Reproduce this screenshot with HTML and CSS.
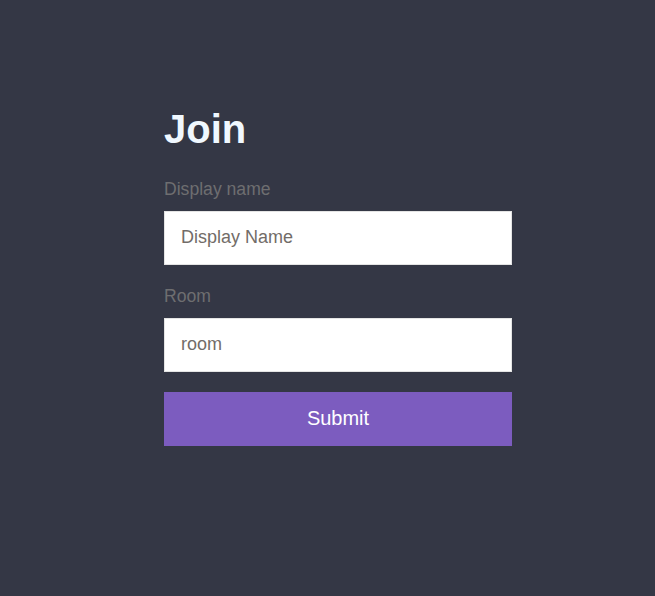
FILE: index.html
```html
<!DOCTYPE html>
<html lang="en">
<head>
<meta charset="utf-8">
<title>Join</title>
<link rel="stylesheet" href="styles.css">
</head>
<body>
<main class="page">
  <form class="join-form">
    <h1 class="title">Join</h1>
    <div class="field">
      <label class="label" for="name">Display name</label>
      <input class="input" id="name" type="text" placeholder="Display Name">
    </div>
    <div class="field">
      <label class="label" for="room">Room</label>
      <input class="input" id="room" type="text" placeholder="room">
    </div>
    <button class="submit" type="button">Submit</button>
  </form>
</main>
</body>
</html>
```

FILE: styles.css
```css
html, body {
  margin: 0;
  padding: 0;
  background: #343745;
  height: 100%;
}
body {
  font-family: "Liberation Sans", Arial, sans-serif;
}
.page {
  padding: 106px 0 0 164px;
}
.join-form {
  width: 348px;
  display: flex;
  flex-direction: column;
}
.title {
  margin: 0 0 26px;
  font-size: 40px;
  line-height: 46px;
  font-weight: bold;
  color: #f0f8ff;
}
.field {
  display: flex;
  flex-direction: column;
  margin-bottom: 20px;
}
.label {
  font-size: 17.6px;
  line-height: 21px;
  padding-top: 1px;
  color: #6e6e70;
  margin-bottom: 11px;
}
.input {
  box-sizing: border-box;
  height: 54px;
  width: 100%;
  margin: 0;
  padding: 0 16px 2px;
  border: 1px solid #e4e4e4;
  background: #ffffff;
  font-family: "Liberation Sans", Arial, sans-serif;
  font-size: 18px;
  color: #333;
  outline: none;
}
.input::placeholder {
  color: #726c68;
  opacity: 1;
}
.submit {
  box-sizing: border-box;
  height: 54px;
  width: 100%;
  margin: 0;
  padding: 0 0 2px;
  border: none;
  background: #7c5cbf;
  color: #ffffff;
  font-family: "Liberation Sans", Arial, sans-serif;
  font-size: 20px;
  cursor: pointer;
}
```
